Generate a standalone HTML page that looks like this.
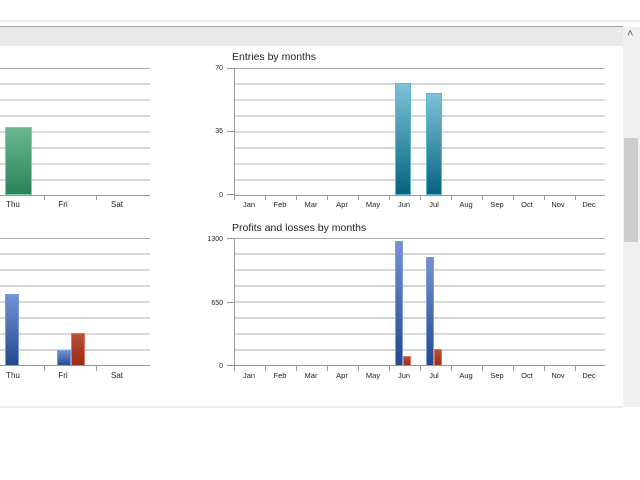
<!DOCTYPE html>
<html><head><meta charset="utf-8"><style>
body{margin:0;width:640px;height:480px;background:#fff;overflow:hidden;position:relative;font-family:"Liberation Sans",sans-serif}
.a{position:absolute}
</style></head><body>
<div class="a" style="left:0;top:20px;width:640px;height:2px;background:#ececec"></div>
<div class="a" style="left:0;top:26px;width:623px;height:1px;background:#a0a0a0"></div>
<div class="a" style="left:0;top:27px;width:623px;height:19px;background:#e9e9e9"></div>
<div class="a" style="left:623px;top:27px;width:17px;height:380px;background:#f0f0f0"></div>
<div class="a" style="left:624px;top:138px;width:14px;height:104px;background:#cdcdcd"></div>
<div class="a" style="left:627px;top:28px;font-size:11px;color:#606060">&#708;</div>
<div class="a" style="left:0;top:406px;width:623px;height:2px;background:#ececec"></div>
<svg class="a" style="left:0;top:0" width="623" height="406" font-family="Liberation Sans, sans-serif">
<defs>
<linearGradient id="g" x1="0" y1="0" x2="0" y2="1"><stop offset="0" stop-color="#6ab88f"/><stop offset="1" stop-color="#2a8257"/></linearGradient>
<linearGradient id="t" x1="0" y1="0" x2="0" y2="1"><stop offset="0" stop-color="#7ec3d9"/><stop offset="1" stop-color="#05627f"/></linearGradient>
<linearGradient id="b" x1="0" y1="0" x2="0" y2="1"><stop offset="0" stop-color="#7593d4"/><stop offset="1" stop-color="#22488e"/></linearGradient>
<linearGradient id="r" x1="0" y1="0" x2="0" y2="1"><stop offset="0" stop-color="#b9513b"/><stop offset="1" stop-color="#992a10"/></linearGradient>
<g id="grid">
<line x1="0" x2="150" y1="0.5" y2="0.5" stroke="#aaa"/>
<line x1="0" x2="150" y1="16" y2="16" stroke="#d6d6d6" stroke-width="2"/>
<line x1="0" x2="150" y1="32" y2="32" stroke="#b4b4b4"/>
<line x1="0" x2="150" y1="48" y2="48" stroke="#d6d6d6" stroke-width="2"/>
<line x1="0" x2="150" y1="64" y2="64" stroke="#b4b4b4"/>
<line x1="0" x2="150" y1="80" y2="80" stroke="#d6d6d6" stroke-width="2"/>
<line x1="0" x2="150" y1="96" y2="96" stroke="#b4b4b4"/>
<line x1="0" x2="150" y1="112" y2="112" stroke="#d6d6d6" stroke-width="2"/>
<line x1="0" x2="150" y1="127.5" y2="127.5" stroke="#999"/>
</g>
</defs>
<!-- left top -->
<use href="#grid" x="0" y="68"/>
<line x1="44.5" x2="44.5" y1="195" y2="200" stroke="#999"/><line x1="96.5" x2="96.5" y1="195" y2="200" stroke="#999"/>
<rect x="5.5" y="127.5" width="26" height="67" fill="url(#g)" stroke="#7fcfa4"/>
<g font-size="8" fill="#222" text-anchor="middle"><text x="13" y="207">Thu</text><text x="63" y="207">Fri</text><text x="117" y="207">Sat</text></g>
<!-- left bottom -->
<use href="#grid" x="0" y="238"/>
<line x1="44.5" x2="44.5" y1="366" y2="371" stroke="#999"/><line x1="96.5" x2="96.5" y1="366" y2="371" stroke="#999"/>
<rect x="5.5" y="294.5" width="13" height="71" fill="url(#b)" stroke="#7a9be0"/>
<rect x="57.5" y="350.5" width="13" height="15" fill="url(#b)" stroke="#7a9be0"/>
<rect x="71.5" y="333.5" width="13" height="32" fill="url(#r)" stroke="#e0775d"/>
<g font-size="8" fill="#222" text-anchor="middle"><text x="13" y="378">Thu</text><text x="63" y="378">Fri</text><text x="117" y="378">Sat</text></g>
<!-- right top -->
<text x="232" y="60" font-size="10.5" fill="#222">Entries by months</text>
<g transform="translate(234,0) scale(2.473,1)"><use href="#grid" x="0" y="68"/></g>
<line x1="234.5" x2="234.5" y1="68" y2="200" stroke="#999"/>
<g font-size="7" fill="#222" text-anchor="end"><text x="223" y="70">70</text><text x="223" y="133">35</text><text x="223" y="197">0</text></g>
<g stroke="#999">
<line x1="227" x2="234" y1="68.5" y2="68.5"/><line x1="227" x2="234" y1="131.5" y2="131.5"/><line x1="227" x2="234" y1="194.5" y2="194.5"/>
<line x1="265.5" x2="265.5" y1="195" y2="200"/><line x1="296.5" x2="296.5" y1="195" y2="200"/><line x1="327.5" x2="327.5" y1="195" y2="200"/><line x1="358.5" x2="358.5" y1="195" y2="200"/><line x1="389.5" x2="389.5" y1="195" y2="200"/><line x1="420.5" x2="420.5" y1="195" y2="200"/><line x1="451.5" x2="451.5" y1="195" y2="200"/><line x1="482.5" x2="482.5" y1="195" y2="200"/><line x1="513.5" x2="513.5" y1="195" y2="200"/><line x1="544.5" x2="544.5" y1="195" y2="200"/><line x1="575.5" x2="575.5" y1="195" y2="200"/>
</g>
<rect x="395.5" y="83.5" width="15" height="111" fill="url(#t)" stroke="#5cb7d4"/>
<rect x="426.5" y="93.5" width="15" height="101" fill="url(#t)" stroke="#5cb7d4"/>
<g font-size="7.5" fill="#222" text-anchor="middle"><text x="249" y="207">Jan</text><text x="280" y="207">Feb</text><text x="311" y="207">Mar</text><text x="342" y="207">Apr</text><text x="373" y="207">May</text><text x="404" y="207">Jun</text><text x="434" y="207">Jul</text><text x="466" y="207">Aug</text><text x="497" y="207">Sep</text><text x="527" y="207">Oct</text><text x="558" y="207">Nov</text><text x="589" y="207">Dec</text></g>
<!-- right bottom -->
<text x="232" y="231" font-size="10.5" fill="#222">Profits and losses by months</text>
<g transform="translate(234,0) scale(2.473,1)"><use href="#grid" x="0" y="238"/></g>
<line x1="234.5" x2="234.5" y1="238" y2="371" stroke="#999"/>
<g font-size="7" fill="#222" text-anchor="end"><text x="223" y="241">1300</text><text x="223" y="305">650</text><text x="223" y="368">0</text></g>
<g stroke="#999">
<line x1="227" x2="234" y1="238.5" y2="238.5"/><line x1="227" x2="234" y1="302.5" y2="302.5"/><line x1="227" x2="234" y1="365.5" y2="365.5"/>
<line x1="265.5" x2="265.5" y1="366" y2="371"/><line x1="296.5" x2="296.5" y1="366" y2="371"/><line x1="327.5" x2="327.5" y1="366" y2="371"/><line x1="358.5" x2="358.5" y1="366" y2="371"/><line x1="389.5" x2="389.5" y1="366" y2="371"/><line x1="420.5" x2="420.5" y1="366" y2="371"/><line x1="451.5" x2="451.5" y1="366" y2="371"/><line x1="482.5" x2="482.5" y1="366" y2="371"/><line x1="513.5" x2="513.5" y1="366" y2="371"/><line x1="544.5" x2="544.5" y1="366" y2="371"/><line x1="575.5" x2="575.5" y1="366" y2="371"/>
</g>
<rect x="395.5" y="241.5" width="7" height="124" fill="url(#b)" stroke="#7a9be0"/>
<rect x="403.5" y="356.5" width="7" height="9" fill="url(#r)" stroke="#e0775d"/>
<rect x="426.5" y="257.5" width="7" height="108" fill="url(#b)" stroke="#7a9be0"/>
<rect x="434.5" y="349.5" width="7" height="16" fill="url(#r)" stroke="#e0775d"/>
<g font-size="7.5" fill="#222" text-anchor="middle"><text x="249" y="378">Jan</text><text x="280" y="378">Feb</text><text x="311" y="378">Mar</text><text x="342" y="378">Apr</text><text x="373" y="378">May</text><text x="404" y="378">Jun</text><text x="434" y="378">Jul</text><text x="466" y="378">Aug</text><text x="497" y="378">Sep</text><text x="527" y="378">Oct</text><text x="558" y="378">Nov</text><text x="589" y="378">Dec</text></g>
</svg>
</body></html>
